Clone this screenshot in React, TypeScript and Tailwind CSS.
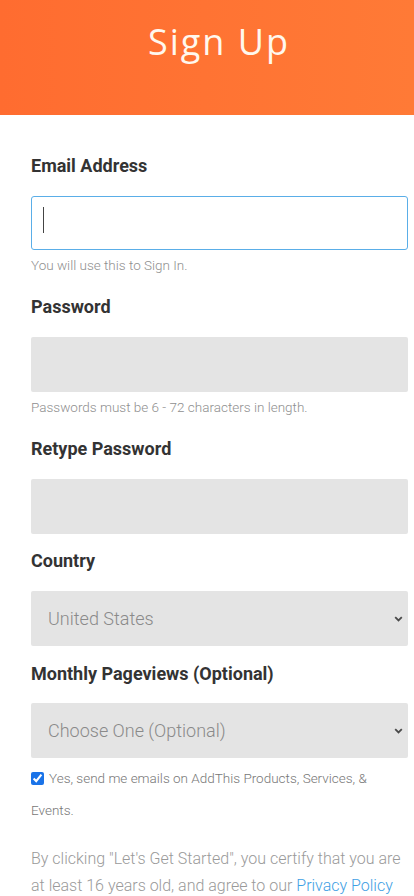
import { useState } from "react";

function Label({ children, className = "" }: { children: React.ReactNode; className?: string }) {
  return (
    <label className={`block text-[18px] leading-[24px] font-bold text-[#333333] ${className}`}>
      {children}
    </label>
  );
}

function Helper({ children }: { children: React.ReactNode }) {
  return <p className="mt-[6px] text-[13.5px] leading-[18px] font-light text-[#8f8f8f]">{children}</p>;
}

function Select({ value, options }: { value: string; options: string[] }) {
  return (
    <div className="relative">
      <select
        defaultValue={value}
        className="block h-[55px] w-full appearance-none rounded-[2px] bg-[#e4e4e4] pl-[17px] pr-10 text-[18px] font-light text-[#8a8a8a] outline-none"
      >
        {options.map((o) => (
          <option key={o}>{o}</option>
        ))}
      </select>
      {/* chevron */}
      <svg
        className="pointer-events-none absolute right-[5px] top-1/2 -translate-y-1/2"
        width="9"
        height="6"
        viewBox="0 0 9 6"
      >
        <path d="M1.2 1.2 L4.5 4.5 L7.8 1.2" fill="none" stroke="#4a4a4a" strokeWidth="1.8" />
      </svg>
    </div>
  );
}

export default function App() {
  const [optIn, setOptIn] = useState(true);

  return (
    <div className="min-h-[896px] bg-white font-['Roboto',sans-serif]">
      {/* Header */}
      <header className="h-[115px] bg-gradient-to-r from-[#ff6c30] to-[#ff7a36] pl-[24px] pt-[20px] text-center">
        <h1 className="font-['Open_Sans',sans-serif] text-[36px] leading-[44px] tracking-[2px] text-[#fff8ee]">
          Sign Up
        </h1>
      </header>

      {/* Form */}
      <form className="pl-[31px] pr-[6px] pt-[39px]">
        <Label>Email Address</Label>
        <div className="relative mt-[18px]">
          <input
            type="email"
            className="block h-[54px] w-full rounded-[3px] border border-[#5aaee8] bg-white pl-[12px] text-[16px] outline-none"
          />
          <span className="pointer-events-none absolute left-[12px] top-[11px] h-[26px] w-px bg-[#444]" />
        </div>
        <Helper>You will use this to Sign In.</Helper>

        <Label className="mt-[21px]">Password</Label>
        <input
          type="password"
          className="mt-[18px] block h-[55px] w-full rounded-[2px] bg-[#e4e4e4] px-3 outline-none"
        />
        <Helper>Passwords must be 6 - 72 characters in length.</Helper>

        <Label className="mt-[21px]">Retype Password</Label>
        <input
          type="password"
          className="mt-[18px] block h-[55px] w-full rounded-[2px] bg-[#e4e4e4] px-3 outline-none"
        />

        <Label className="mt-[15px]">Country</Label>
        <div className="mt-[18px]">
          <Select value="United States" options={["United States", "Canada", "United Kingdom"]} />
        </div>

        <Label className="mt-[16px]">Monthly Pageviews (Optional)</Label>
        <div className="mt-[17px]">
          <Select value="Choose One (Optional)" options={["Choose One (Optional)", "0 - 10K", "10K - 100K"]} />
        </div>

        <div className="mt-[4px] pr-[20px] text-[13.5px] leading-[32px] font-light text-[#777777]">
          <input
            type="checkbox"
            checked={optIn}
            onChange={(e) => setOptIn(e.target.checked)}
            className="mr-[5px] inline-block h-[13px] w-[13px] -translate-y-[1px] align-middle accent-[#1a73e8]"
          />
          Yes, send me emails on AddThis Products, Services, &amp; Events.
        </div>

        <p className="mt-[19px] whitespace-nowrap text-[16px] leading-[27px] font-light text-[#9a9a9a]">
          By clicking "Let's Get Started", you certify that you are
          <br />
          at least 16 years old, and agree to our <a className="text-[#3ea0e4]">Privacy Policy</a>
          <br />
          and <a className="text-[#3ea0e4]">Terms of Service</a>.
        </p>
      </form>
    </div>
  );
}
